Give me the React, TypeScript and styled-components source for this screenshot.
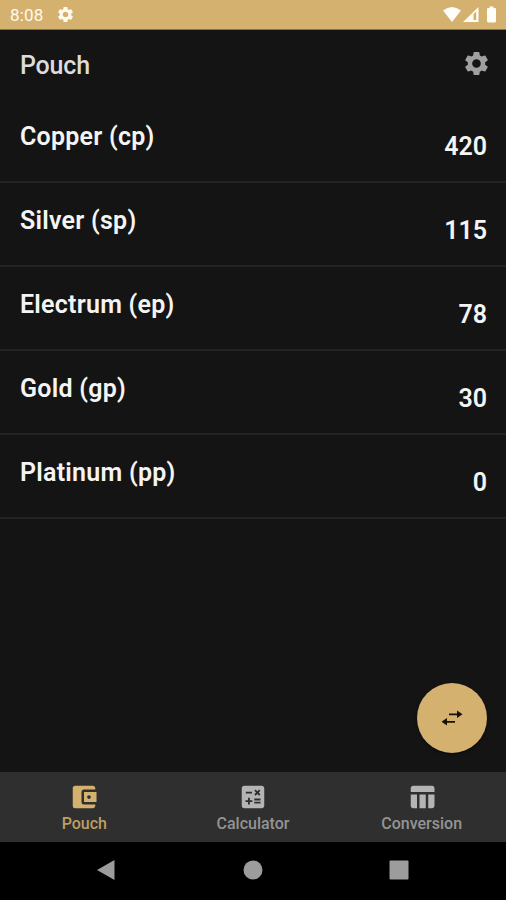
import React from 'react';
import styled, { createGlobalStyle } from 'styled-components';
import { MdSettings, MdAccountBalanceWallet, MdCalculate, MdTableChart } from 'react-icons/md';

const gold = '#d5b16f';

const GlobalStyle = createGlobalStyle`
  body { margin: 0; background: #141414; font-family: Roboto, sans-serif; }
  * { box-sizing: border-box; }
  svg { display: block; }
`;

const Screen = styled.div`
  position: relative;
  display: flex;
  flex-direction: column;
  width: 506px;
  height: 900px;
  overflow: hidden;
  background: #141414;
`;

const StatusBar = styled.div`
  display: flex;
  align-items: center;
  height: 30px;
  padding: 0 9px 0 10px;
  background: ${gold};
  border-bottom: 1px solid #8b7349;
  color: #fffaf0;
`;

const Clock = styled.span`
  width: 46px;
  font-size: 17px;
  line-height: 20px;
  padding-top: 1px;
  letter-spacing: 0.2px;
`;

const StatusIcons = styled.div`
  margin-left: auto;
`;

const Header = styled.header`
  display: flex;
  align-items: center;
  justify-content: space-between;
  height: 69px;
  padding: 0 15px 0 20px;
`;

const Title = styled.h1`
  margin: 2px 0 0;
  font-size: 25px;
  line-height: 30px;
  font-weight: 500;
  letter-spacing: -0.2px;
  color: #dcdcdc;
`;

const SettingsButton = styled.button`
  margin-top: -2px;
  padding: 0;
  border: 0;
  background: none;
  color: #a0a0a0;
`;

const List = styled.main`
  flex: 1;
`;

const Row = styled.div`
  display: flex;
  justify-content: space-between;
  height: 84px;
  padding: 0 19px 0 20px;
  border-bottom: 2px solid #242424;
  color: #f4f4f4;
  font-weight: 600;
  font-size: 25px;
  line-height: 30px;
`;

const CoinName = styled.span`
  padding-top: 23px;
  letter-spacing: 0.25px;
`;

const Amount = styled.span`
  padding-top: 33px;
`;

const SwapButton = styled.button`
  position: absolute;
  right: 19px;
  bottom: 147px;
  display: flex;
  align-items: center;
  justify-content: center;
  width: 70px;
  height: 70px;
  padding: 0;
  border: 0;
  border-radius: 50%;
  background: ${gold};
  box-shadow: 0 1px 3px rgba(0, 0, 0, 0.55);
`;

const Tabs = styled.nav`
  display: grid;
  grid-template-columns: repeat(3, 1fr);
  height: 70px;
  background: #2f2f2f;
`;

const Tab = styled.div<{ $active?: boolean }>`
  display: flex;
  flex-direction: column;
  align-items: center;
  padding-top: 10px;
  color: ${({ $active }) => ($active ? gold : '#b4b4b4')};
`;

const TabLabel = styled.span<{ $active?: boolean }>`
  margin-top: 2px;
  font-size: 16px;
  line-height: 20px;
  font-weight: 500;
  letter-spacing: 0;
  color: ${({ $active }) => ($active ? '#bd9e65' : '#949494')};
`;

const SystemNav = styled.div`
  display: grid;
  grid-template-columns: repeat(3, 146px);
  justify-content: center;
  align-items: center;
  justify-items: center;
  height: 58px;
  padding-bottom: 2px;
  background: #000;
`;

const coins = [
  { name: 'Copper (cp)', amount: 420 },
  { name: 'Silver (sp)', amount: 115 },
  { name: 'Electrum (ep)', amount: 78 },
  { name: 'Gold (gp)', amount: 30 },
  { name: 'Platinum (pp)', amount: 0 },
];

const tabs = [
  { label: 'Pouch', Icon: MdAccountBalanceWallet },
  { label: 'Calculator', Icon: MdCalculate },
  { label: 'Conversion', Icon: MdTableChart },
];

export default function App() {
  return (
    <Screen>
      <GlobalStyle />
      <StatusBar>
        <Clock>8:08</Clock>
        <MdSettings size={19} />
        <StatusIcons>
          <svg width="54" height="18" viewBox="0 0 54 18" fill="#fffdf8">
            <path d="M0 4.6Q9-2.6 18 4.6L9 16Z" />
            <path d="M20 16L35.5 1V16Z" />
            <path d="M30.5 8L33.2 5.4V14H30.5Z" fill={gold} />
            <path d="M46.5 0.5h4V2h1.5q1 0 1 1V15q0 1.500-1.500 1.500H45.500Q44 16.500 44 15V3q0-1 1-1h1.500Z" />
          </svg>
        </StatusIcons>
      </StatusBar>
      <Header>
        <Title>Pouch</Title>
        <SettingsButton aria-label="Settings">
          <MdSettings size={29} />
        </SettingsButton>
      </Header>
      <List>
        {coins.map(({ name, amount }) => (
          <Row key={name}>
            <CoinName>{name}</CoinName>
            <Amount>{amount}</Amount>
          </Row>
        ))}
      </List>
      <SwapButton aria-label="Swap">
        <svg width="24" height="18" viewBox="0 0 24 18" fill="#161005">
          <path d="M9 4.500h8V1.500L22.500 5.300L17 9V6.200H9Z" />
          <path d="M15 12H7V9L1.500 12.800L7 16.500V13.700H15Z" />
        </svg>
      </SwapButton>
      <Tabs>
        {tabs.map(({ label, Icon }, i) => (
          <Tab key={label} $active={i === 0}>
            <Icon size={30} />
            <TabLabel $active={i === 0}>{label}</TabLabel>
          </Tab>
        ))}
      </Tabs>
      <SystemNav>
        <svg width="22" height="22" viewBox="0 0 22 22" fill="#9c9c9c">
          <path d="M1 11L18.500 1V21Z" />
        </svg>
        <svg width="20" height="20" viewBox="0 0 20 20" fill="#9c9c9c">
          <circle cx="10" cy="10" r="9.500" />
        </svg>
        <svg width="20" height="20" viewBox="0 0 20 20" fill="#9c9c9c">
          <rect x="0.500" y="0.500" width="19" height="19" rx="1" />
        </svg>
      </SystemNav>
    </Screen>
  );
}
